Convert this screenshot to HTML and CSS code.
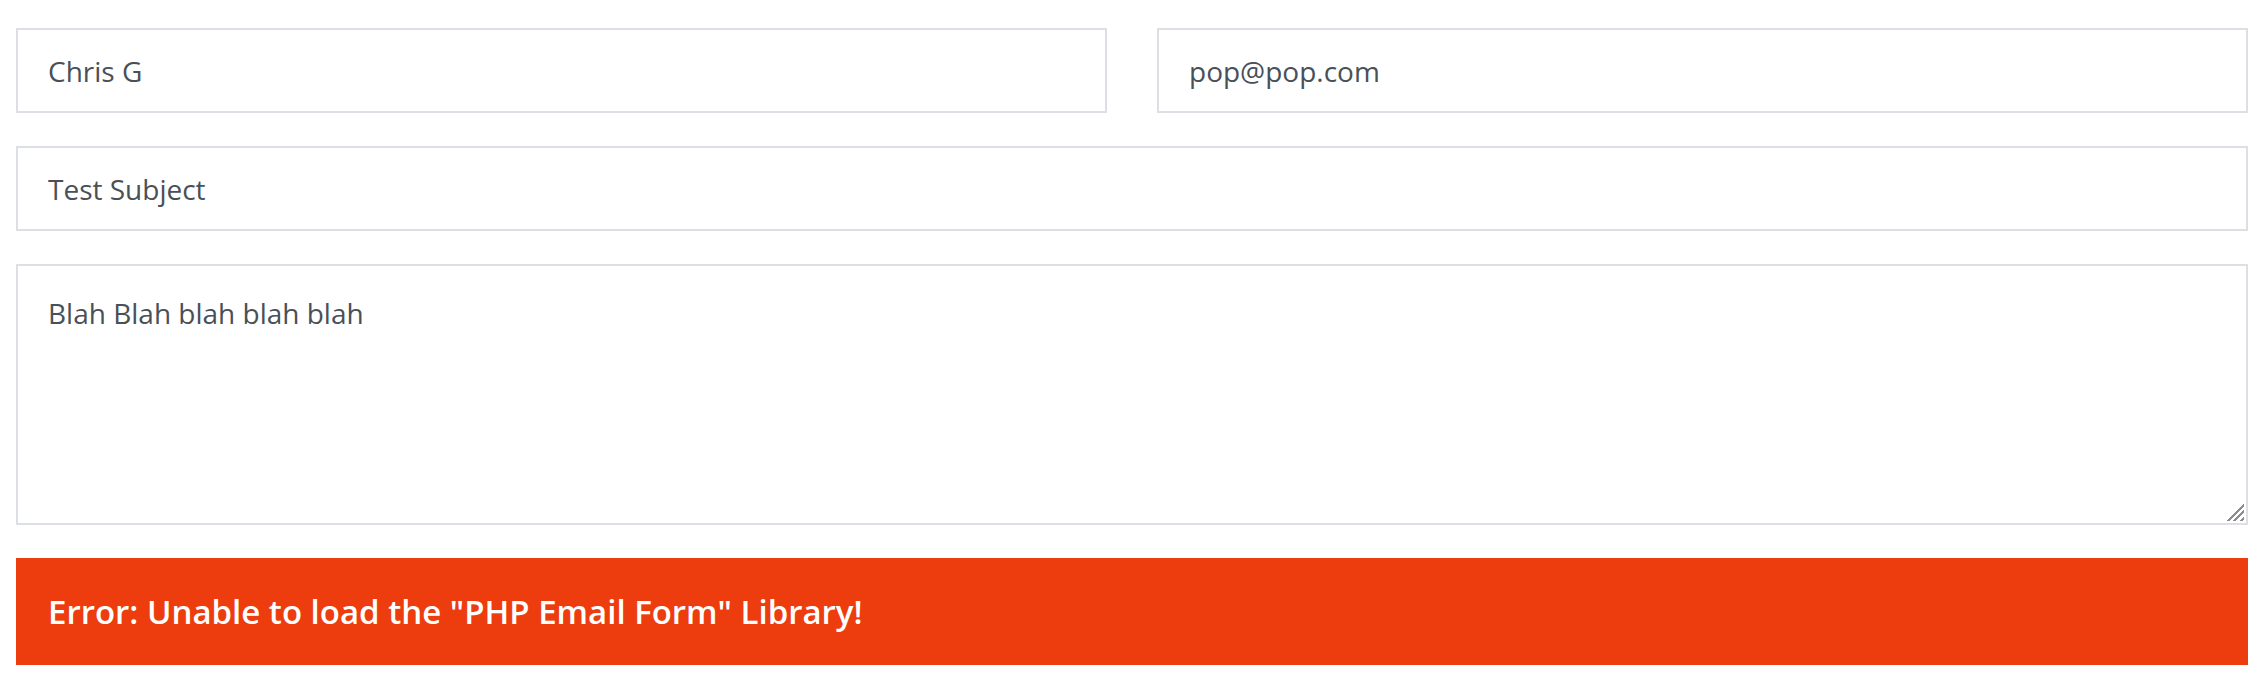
FILE: index.html
```html
<!DOCTYPE html>
<html lang="en">
<head>
<meta charset="utf-8">
<title>Contact form</title>
<link rel="stylesheet" href="styles.css">
</head>
<body>
<form class="contact-form">
  <div class="row">
    <input class="field" type="text" name="name" value="Chris G">
    <input class="field" type="email" name="email" value="pop@pop.com">
  </div>
  <input class="field" type="text" name="subject" value="Test Subject">
  <div class="message-wrap">
    <textarea class="field message" name="message">Blah Blah blah blah blah</textarea>
  </div>
  <div class="error-message">Error: Unable to load the "PHP Email Form" Library!</div>
</form>
</body>
</html>
```

FILE: styles.css
```css
html, body {
  margin: 0;
  padding: 0;
  background: #ffffff;
}

.contact-form {
  display: flex;
  flex-direction: column;
  gap: 33px;
  padding: 28px 14px 0 16px;
  font-family: "Open Sans", "Liberation Sans", sans-serif;
}

.row {
  display: grid;
  grid-template-columns: 1fr 1fr;
  gap: 50px;
}

.field {
  box-sizing: border-box;
  display: block;
  width: 100%;
  height: 85px;
  margin: 0;
  padding: 0 30px;
  border: 2px solid #dce0e5;
  border-radius: 0;
  background: #ffffff;
  color: #495057;
  font-family: "Open Sans", "Liberation Sans", sans-serif;
  font-size: 28px;
  line-height: 42px;
  outline: none;
}

.message-wrap {
  position: relative;
}

.message-wrap::after {
  content: "";
  position: absolute;
  right: 4px;
  bottom: 4px;
  width: 20px;
  height: 20px;
  pointer-events: none;
  background:
    linear-gradient(135deg, #ffffff 50%, transparent 50%),
    repeating-linear-gradient(135deg, #ffffff 0 2.5px, #8c8c8c 2.5px 4.5px);
}

.message {
  height: 261px;
  padding: 22px 30px;
  line-height: 50px;
  resize: none;
}

.error-message {
  box-sizing: border-box;
  height: 107px;
  padding: 29px 32px;
  background: #ed3c0d;
  color: #ffffff;
  font-size: 33px;
  font-weight: 600;
  line-height: 49px;
  white-space: nowrap;
}
```
